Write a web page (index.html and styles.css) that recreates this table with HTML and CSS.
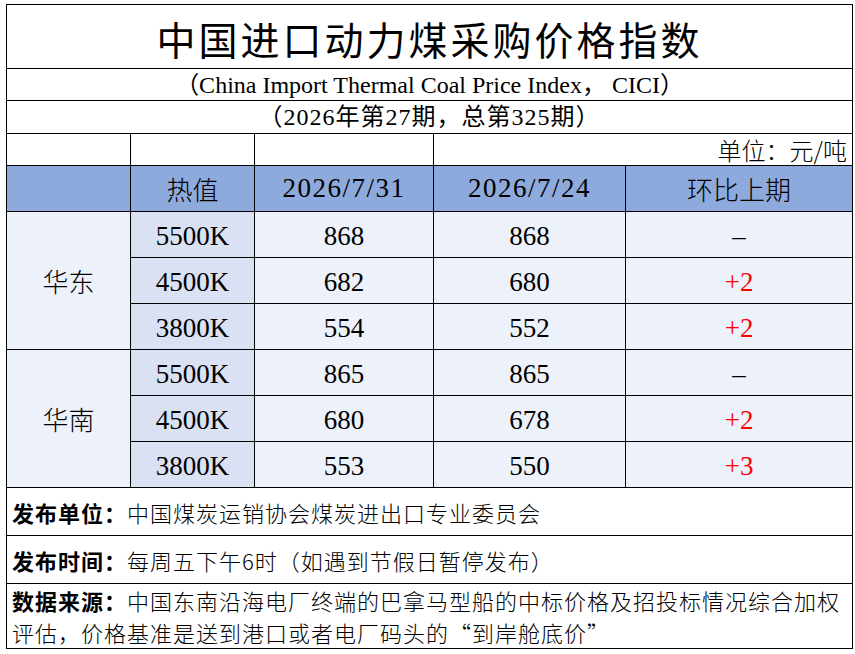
FILE: index.html
```html
<!DOCTYPE html>
<html lang="zh-CN">
<head>
<meta charset="utf-8">
<title>中国进口动力煤采购价格指数</title>
<link rel="stylesheet" href="styles.css">
</head>
<body>
<table class="sheet">
  <colgroup>
    <col class="c1"><col class="c2"><col class="c3"><col class="c4"><col class="c5">
  </colgroup>
  <tr class="r-title"><td colspan="5" class="title">中国进口动力煤采购价格指数</td></tr>
  <tr class="r-sub"><td colspan="5" class="sub">（China Import Thermal Coal Price Index， CICI）</td></tr>
  <tr class="r-sub2"><td colspan="5" class="sub issue">（2026年第27期，总第325期）</td></tr>
  <tr class="r-unit"><td></td><td></td><td></td><td colspan="2" class="unit">单位：元/吨</td></tr>
  <tr class="r-head">
    <td class="hd"></td><td class="hd">热值</td><td class="hd num">2026/7/31</td><td class="hd num">2026/7/24</td><td class="hd">环比上期</td>
  </tr>
  <tr class="r-data">
    <td rowspan="3" class="region">华东</td><td class="heat num">5500K</td><td class="val num">868</td><td class="val num">868</td><td class="val num">–</td>
  </tr>
  <tr class="r-data">
    <td class="heat num">4500K</td><td class="val num">682</td><td class="val num">680</td><td class="val num up">+2</td>
  </tr>
  <tr class="r-data">
    <td class="heat num">3800K</td><td class="val num">554</td><td class="val num">552</td><td class="val num up">+2</td>
  </tr>
  <tr class="r-data">
    <td rowspan="3" class="region">华南</td><td class="heat num">5500K</td><td class="val num">865</td><td class="val num">865</td><td class="val num">–</td>
  </tr>
  <tr class="r-data">
    <td class="heat num">4500K</td><td class="val num">680</td><td class="val num">678</td><td class="val num up">+2</td>
  </tr>
  <tr class="r-data">
    <td class="heat num">3800K</td><td class="val num">553</td><td class="val num">550</td><td class="val num up">+3</td>
  </tr>
  <tr class="r-foot"><td colspan="5" class="foot"><b>发布单位：</b>中国煤炭运销协会煤炭进出口专业委员会</td></tr>
  <tr class="r-foot"><td colspan="5" class="foot"><b>发布时间：</b>每周五下午6时（如遇到节假日暂停发布）</td></tr>
  <tr class="r-foot3"><td colspan="5" class="foot"><b>数据来源：</b><span>中国东南沿海电厂终端的巴拿马型船的中标价格及招投标情况综合加权</span><br><span>评估，价格基准是送到港口或者电厂码头的“到岸舱底价”</span></td></tr>
</table>
</body>
</html>
```

FILE: styles.css
```css
html, body {
  margin: 0;
  padding: 0;
  background: #ffffff;
}
body {
  padding: 4px 0 0 6px;
  font-family: "Liberation Serif", "Noto Sans CJK SC", serif;
  color: #000;
}
.sheet {
  border-collapse: collapse;
  table-layout: fixed;
  width: 846px;
}
.sheet td {
  border: 1px solid #000;
  padding: 0;
  text-align: center;
  vertical-align: middle;
  white-space: nowrap;
}
.c1 { width: 124px; }
.c2 { width: 124px; }
.c3 { width: 179px; }
.c4 { width: 192px; }
.c5 { width: 227px; }

.r-title { height: 64px; }
.r-sub { height: 32px; }
.r-sub2 { height: 33px; }
.r-unit { height: 32px; }
.r-head { height: 46px; }
.r-data { height: 46px; }
.r-foot { height: 48px; }
.r-foot3 { height: 65px; }

.title {
  font-family: "Noto Sans CJK SC", sans-serif;
  font-size: 39px;
  font-weight: 400;
  letter-spacing: 3px;
  line-height: 1;
  padding-top: 3px !important;
}
.sub {
  font-size: 24px;
  line-height: 1;
}
.issue {
  letter-spacing: 1px;
}
.unit {
  text-align: right !important;
  padding-right: 5px !important;
  font-family: "Noto Sans CJK SC", sans-serif;
  font-size: 24px;
  font-weight: 300;
  line-height: 28px;
}
.hd {
  background: #8ea9db;
  font-size: 26px;
  font-family: "Noto Sans CJK SC", sans-serif;
  font-weight: 300;
}
.hd.num {
  font-family: "Liberation Serif", serif;
  font-size: 27px;
  letter-spacing: 1.5px;
}
.num {
  font-size: 27px;
}
.r-data .num {
  padding-top: 3px;
}
.region {
  background: #edf1f9;
  font-family: "Noto Sans CJK SC", sans-serif;
  font-weight: 300;
  font-size: 26px;
}
.heat {
  background: #d9e1f2;
}
.val {
  background: #edf1f9;
}
.up {
  color: #ff0000;
}
.foot {
  text-align: left !important;
  padding-left: 5px !important;
  font-family: "Noto Sans CJK SC", sans-serif;
  font-size: 22px;
  letter-spacing: 1px;
  font-weight: 300;
  line-height: 32px;
}
.foot b {
  font-weight: 700;
}
```
